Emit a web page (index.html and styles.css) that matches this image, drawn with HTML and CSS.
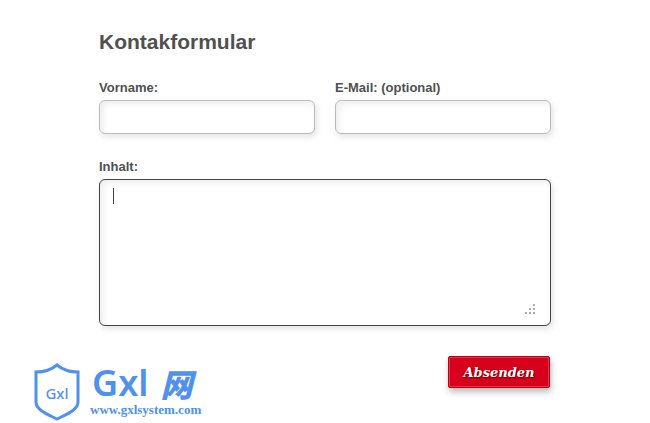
FILE: index.html
```html
<!DOCTYPE html>
<html lang="de">
<head>
  <meta charset="UTF-8" />
  <meta name="viewport" content="width=device-width, initial-scale=1" />
  <title>Kontakformular</title>
  <link rel="stylesheet" href="styles.css">
</head>
<body>

<form class="contact">
  <h1>Kontakformular</h1>

  <div class="row">
    <div class="field">
      <label for="vorname">Vorname:</label>
      <input type="text" id="vorname" name="vorname" autocomplete="off" />
    </div>
    <div class="field">
      <label for="email">E-Mail: (optional)</label>
      <input type="email" id="email" name="email" autocomplete="off" />
    </div>
  </div>

  <div class="field">
    <label for="inhalt">Inhalt:</label>
    <div class="area">
      <textarea id="inhalt" name="inhalt"></textarea>
      <span class="caret"></span>
      <svg class="grip" width="10" height="10" viewBox="0 0 10 10" fill="#aaa">
        <path d="M8 0h2v2h-2z M4 4h2v2h-2z M8 4h2v2h-2z M0 8h2v2h-2z M4 8h2v2h-2z M8 8h2v2h-2z" />
      </svg>
    </div>
  </div>
</form>

<div class="bottom">
  <a class="brand" href="http://www.gxlsystem.com">
    <span class="shield">
      <svg width="46" height="58" viewBox="0 0 46 58" fill="none" stroke="#5090ee" stroke-width="3">
        <path d="M23 2C17 7 10 9 2 9V39C2 47 13 51 23 56C33 51 44 47 44 39V9C36 9 29 7 23 2Z" />
      </svg>
      <span class="shield-text">Gxl</span>
    </span>
    <span class="brand-text">
      <span class="brand-name">Gxl <span class="wang">网</span></span>
      <span class="brand-url">www.gxlsystem.com</span>
    </span>
  </a>
  <button type="button">Absenden</button>
</div>

</body>
</html>
```

FILE: styles.css
```css
* {
  box-sizing: border-box;
}
body {
  background: #fff;
  color: #505050;
  font-family: "Liberation Sans", Arial, sans-serif;
  margin: 0;
}
.contact {
  max-width: 452px;
  margin: 0 auto;
  padding-top: 28px;
}
h1 {
  font-size: 21px;
  line-height: 28px;
  font-weight: bold;
  margin: 0 0 24px;
}
.row {
  display: flex;
  gap: 20px;
  margin-bottom: 25px;
}
.field {
  flex: 1;
}
label {
  display: block;
  font-size: 13px;
  line-height: 16px;
  font-weight: bold;
  margin-bottom: 4px;
}
input, textarea {
  display: block;
  width: 100%;
  border: 1px solid #bbb;
  border-radius: 6px;
  background: #fff;
  color: #505050;
  font-family: inherit;
  font-size: 13px;
  padding: 8px 14px;
  outline: none;
  box-shadow: inset 3px 3px 6px #eee, 2px 3px 6px #e4e4e4;
}
input {
  height: 34px;
}
.area {
  position: relative;
}
textarea {
  height: 147px;
  border-color: #444;
  resize: none;
}
.caret {
  position: absolute;
  left: 14px;
  top: 9px;
  width: 1px;
  height: 16px;
  background: #444;
}
.grip {
  position: absolute;
  right: 16px;
  bottom: 12px;
}
.bottom {
  display: flex;
  justify-content: space-between;
  align-items: flex-start;
  padding: 30px 100px 0 34px;
}
button {
  width: 102px;
  height: 32px;
  padding: 0;
  border: 1px solid #b80016;
  border-radius: 2px;
  background: #d6001c;
  color: #fff;
  font-family: "DejaVu Serif", Georgia, serif;
  font-size: 13px;
  font-weight: bold;
  font-style: italic;
  text-shadow: 1px 1px 2px #600;
  box-shadow: inset 0 0 0 1px #e4364a, 1px 4px 6px #bbb;
  cursor: pointer;
}
.brand {
  display: flex;
  gap: 10px;
  padding-top: 7px;
  color: #5090ee;
  text-decoration: none;
}
.shield {
  position: relative;
  height: 58px;
}
.shield-text {
  position: absolute;
  left: 0;
  right: 0;
  top: 20px;
  text-align: center;
  font-family: "Noto Sans", sans-serif;
  font-size: 15px;
  line-height: 20px;
  font-weight: 500;
}
.brand-text {
  display: flex;
  flex-direction: column;
}
.brand-name {
  display: flex;
  align-items: center;
  gap: 12px;
  padding-left: 2px;
  font-family: "Noto Sans", sans-serif;
  font-size: 36px;
  line-height: 40px;
  font-weight: 600;
}
.wang {
  font-family: "Noto Sans CJK SC", sans-serif;
  font-size: 32px;
  line-height: 36px;
  font-weight: 900;
  font-style: italic;
}
.brand-url {
  font-family: "Liberation Serif", serif;
  font-size: 13px;
  line-height: 14px;
  font-weight: bold;
}
```
